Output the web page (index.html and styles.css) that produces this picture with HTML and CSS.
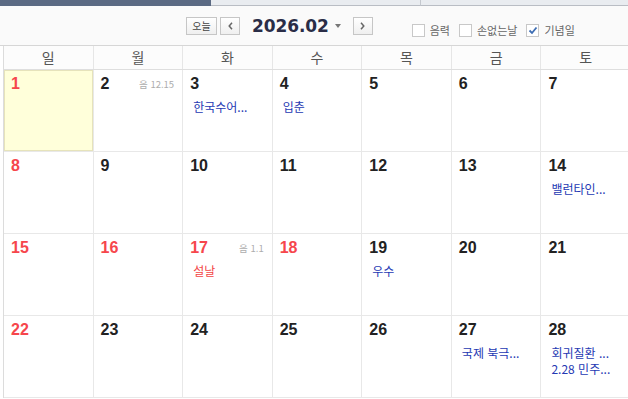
FILE: index.html
```html
<!DOCTYPE html>
<html lang="ko">
<head>
<meta charset="utf-8">
<link rel="stylesheet" href="styles.css">
</head>
<body>
<div class="tabs">
  <div class="tab tab-active"></div>
  <div class="tab tab-mid"></div>
  <div class="tab tab-rest"></div>
</div>
<div class="toolbar">
  <div class="nav">
    <button class="btn btn-today">오늘</button>
    <button class="btn btn-arrow"><svg width="5" height="8" viewBox="0 0 5 8"><path d="M4 0.8 L1.2 4 L4 7.2" fill="none" stroke="#666" stroke-width="1.5"/></svg></button>
    <span class="title">2026.02</span>
    <span class="caret"></span>
    <button class="btn btn-arrow btn-next"><svg width="5" height="8" viewBox="0 0 5 8"><path d="M1 0.8 L3.8 4 L1 7.2" fill="none" stroke="#666" stroke-width="1.5"/></svg></button>
  </div>
  <div class="checks">
    <label class="check"><span class="box"></span>음력</label>
    <label class="check"><span class="box"></span>손없는날</label>
    <label class="check"><span class="box box-on"><svg width="10" height="9" viewBox="0 0 10 9"><path d="M1.5 4.5 L4 7 L8.5 1.5" fill="none" stroke="#3d6db3" stroke-width="1.8"/></svg></span>기념일</label>
  </div>
</div>
<div class="weekdays">
  <div class="wd">일</div><div class="wd">월</div><div class="wd">화</div><div class="wd">수</div><div class="wd">목</div><div class="wd">금</div><div class="wd">토</div>
</div>
<div class="grid">
  <div class="cell today"><div class="top"><span class="num red">1</span></div></div>
  <div class="cell"><div class="top"><span class="num">2</span><span class="lunar">음 12.15</span></div></div>
  <div class="cell"><div class="top"><span class="num">3</span></div><div class="ev">한국수어...</div></div>
  <div class="cell"><div class="top"><span class="num">4</span></div><div class="ev">입춘</div></div>
  <div class="cell"><div class="top"><span class="num">5</span></div></div>
  <div class="cell"><div class="top"><span class="num">6</span></div></div>
  <div class="cell"><div class="top"><span class="num">7</span></div></div>

  <div class="cell"><div class="top"><span class="num red">8</span></div></div>
  <div class="cell"><div class="top"><span class="num">9</span></div></div>
  <div class="cell"><div class="top"><span class="num">10</span></div></div>
  <div class="cell"><div class="top"><span class="num">11</span></div></div>
  <div class="cell"><div class="top"><span class="num">12</span></div></div>
  <div class="cell"><div class="top"><span class="num">13</span></div></div>
  <div class="cell"><div class="top"><span class="num">14</span></div><div class="ev">밸런타인...</div></div>

  <div class="cell"><div class="top"><span class="num red">15</span></div></div>
  <div class="cell"><div class="top"><span class="num red">16</span></div></div>
  <div class="cell"><div class="top"><span class="num red">17</span><span class="lunar">음 1.1</span></div><div class="ev ev-red">설날</div></div>
  <div class="cell"><div class="top"><span class="num red">18</span></div></div>
  <div class="cell"><div class="top"><span class="num">19</span></div><div class="ev">우수</div></div>
  <div class="cell"><div class="top"><span class="num">20</span></div></div>
  <div class="cell"><div class="top"><span class="num">21</span></div></div>

  <div class="cell"><div class="top"><span class="num red">22</span></div></div>
  <div class="cell"><div class="top"><span class="num">23</span></div></div>
  <div class="cell"><div class="top"><span class="num">24</span></div></div>
  <div class="cell"><div class="top"><span class="num">25</span></div></div>
  <div class="cell"><div class="top"><span class="num">26</span></div></div>
  <div class="cell"><div class="top"><span class="num">27</span></div><div class="ev">국제 북극...</div></div>
  <div class="cell"><div class="top"><span class="num">28</span></div><div class="ev">회귀질환 ...</div><div class="ev">2.28 민주...</div></div>
</div>
</body>
</html>
```

FILE: styles.css
```css
html, body {
  margin: 0;
  padding: 0;
  background: #ffffff;
}
body {
  width: 628px;
  height: 399px;
  overflow: hidden;
  font-family: "Noto Sans CJK KR", "Noto Sans", sans-serif;
}
.tabs {
  display: flex;
  height: 6px;
}
.tab {
  box-sizing: border-box;
}
.tab-active {
  width: 211px;
  background: #5b6a83;
}
.tab-mid {
  width: 210px;
  background: #e9ecf0;
  border-bottom: 1px solid #b9bdc4;
  border-right: 1px solid #c4c8ce;
}
.tab-rest {
  flex: 1;
  background: #e9ecf0;
  border-bottom: 1px solid #b9bdc4;
}
.toolbar {
  box-sizing: border-box;
  height: 40px;
  background: #fafafa;
  border-bottom: 1px solid #d6d6d6;
  display: flex;
  align-items: flex-start;
  padding: 11px 0 0 186px;
}
.nav {
  display: flex;
  align-items: center;
  height: 18px;
}
.btn {
  box-sizing: border-box;
  height: 18px;
  margin: 0;
  padding: 0;
  border: 1px solid #c6c6c6;
  background: linear-gradient(#ffffff, #efefef);
  display: flex;
  align-items: center;
  justify-content: center;
  font-family: "Noto Sans CJK KR", sans-serif;
  font-size: 10px;
  color: #444;
  line-height: 1;
}
.btn-today {
  width: 31px;
}
.btn-arrow {
  width: 20px;
  margin-left: 3px;
}
.btn-next {
  margin-left: 12px;
}
.title {
  margin-left: 12px;
  font-family: "DejaVu Sans", sans-serif;
  font-weight: bold;
  font-size: 17px;
  color: #2a2d47;
  line-height: 18px;
  letter-spacing: -0.1px;
}
.caret {
  margin-left: 6px;
  width: 0;
  height: 0;
  border-left: 3.5px solid transparent;
  border-right: 3.5px solid transparent;
  border-top: 4px solid #777;
  margin-top: -1px;
}
.checks {
  display: flex;
  margin-left: 39px;
  margin-top: 7px;
  align-items: center;
  gap: 9px;
}
.check {
  display: flex;
  align-items: center;
  font-size: 11px;
  color: #666;
  line-height: 13px;
}
.box {
  box-sizing: border-box;
  width: 13px;
  height: 13px;
  border: 1px solid #c8c8c8;
  background: #fff;
  margin-right: 5px;
  display: flex;
  align-items: center;
  justify-content: center;
}
.weekdays {
  display: grid;
  grid-template-columns: repeat(7, 1fr);
  width: 628px;
  box-sizing: border-box;
  margin-left: 3px;
  border-left: 1px solid #dcdcdc;
  border-bottom: 1px solid #dedede;
  background: #fcfcfc;
}
.wd {
  height: 23px;
  line-height: 23px;
  text-align: center;
  font-size: 14px;
  color: #555;
  border-right: 1px solid #e6e6e6;
}
.grid {
  display: grid;
  grid-template-columns: repeat(7, 1fr);
  grid-auto-rows: 82px;
  width: 628px;
  box-sizing: border-box;
  margin-left: 3px;
  border-left: 1px solid #dcdcdc;
}
.cell {
  box-sizing: border-box;
  border-right: 1px solid #e8e8e8;
  border-bottom: 1px solid #e8e8e8;
  padding: 4px 8px 0 7px;
  background: #fff;
}
.today {
  background: #ffffda;
  box-shadow: inset 0 0 0 1px #e6e3bb;
}
.top {
  display: flex;
  justify-content: space-between;
  align-items: center;
  height: 20px;
}
.num {
  font-family: "Liberation Sans", sans-serif;
  font-weight: bold;
  font-size: 16px;
  color: #222;
}
.num.red {
  color: #f6464c;
}
.lunar {
  font-size: 9.5px;
  color: #adadad;
  font-family: "Noto Sans CJK KR", sans-serif;
}
.ev {
  font-size: 12px;
  color: #2539b3;
  line-height: 16px;
  padding-left: 3px;
  white-space: nowrap;
}
.top + .ev {
  margin-top: 5px;
}
.ev-red {
  color: #f34545;
}
```
